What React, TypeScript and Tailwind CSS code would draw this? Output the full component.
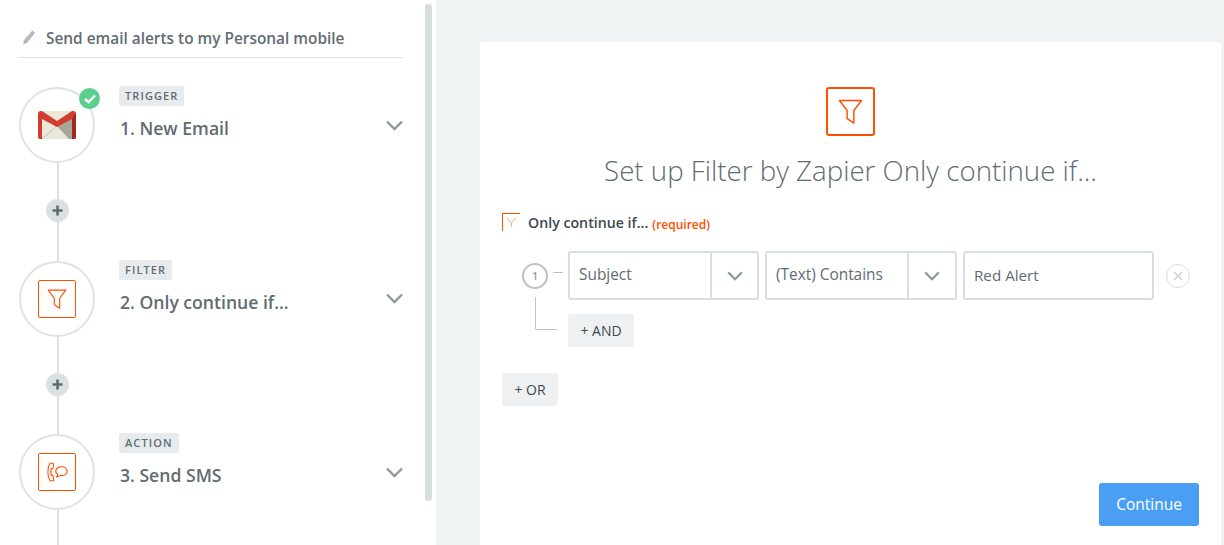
const font = { fontFamily: '"Open Sans", "Noto Sans", sans-serif' };

function Chevron({ className }: { className: string }) {
  return (
    <svg viewBox="0 0 17 11" className={className} fill="none" stroke="currentColor" strokeWidth="2.4">
      <polyline points="1,1.5 8.5,9 16,1.5" />
    </svg>
  );
}

function Funnel({ className, width = 1 }: { className: string; width?: number }) {
  return (
    <svg viewBox="0 0 26 26" className={className} fill="none" stroke="#ff4f00" strokeWidth={width} strokeLinejoin="round">
      <path d="M1.5 1.5H24.5L16.5 12V25L9.5 20.5V12Z" />
    </svg>
  );
}

function Gmail() {
  return (
    <svg viewBox="0 0 38 28" className="w-[38px] h-[28px]">
      <rect x="1" y="0" width="36" height="28" rx="1.5" fill="#ebe8da" />
      <path d="M19 15L34 7V28H31Z" fill="#a6a69b" />
      <path d="M4 28L19 15" stroke="#a5a495" strokeWidth="0.6" />
      <path d="M0 3Q0 0 3 0H4L19 10L34 0H35Q38 0 38 3V26Q38 28 36 28H34V8L19 16L4 8V28H2Q0 28 0 26Z" fill="#d23b2f" />
      <path d="M34 8L38 2V26Q38 28 36 28H34Z" fill="#a0281c" />
    </svg>
  );
}

function Phone() {
  return (
    <svg viewBox="0 0 24 22" className="w-[21px] h-[20px]" fill="none" stroke="#ff4f00" strokeWidth="1.3" strokeLinejoin="round">
      <path d="M6 1H3.5C1.5 4 1 7.5 1 11C1 14.5 1.5 18 3.5 21H6.5C7.5 21 8 20 7.5 19L6.8 15.5C6.5 14.6 5.5 14.6 4.8 15C4.2 12.5 4.2 9.5 4.8 7C5.5 7.4 6.5 7.4 6.8 6.5L7.5 3C8 2 7 1 6 1Z" />
      <path d="M16.5 5C12.8 5 10 7.2 10 10C10 11.6 10.9 12.9 12.3 13.7C12.2 15 11.6 15.8 10.8 16.5C12.8 16.4 14.3 15.8 15.3 14.9C15.7 15 16.1 15 16.5 15C20.2 15 23 12.8 23 10C23 7.2 20.2 5 16.5 5Z" />
    </svg>
  );
}

function Step({ tag, title, icon, plus = true, check = false }: { tag: string; title: string; icon: React.ReactNode; plus?: boolean; check?: boolean }) {
  return (
    <div className="flex h-[173.5px] shrink-0">
      <div className="flex flex-col items-center w-[76px] shrink-0">
        <div className="relative w-[76px] h-[76px] shrink-0 rounded-full border-2 border-[#dfe3e6] flex items-center justify-center">
          {icon}
          {check && (
            <div className="absolute -top-[1px] -right-[7px] w-[21px] h-[21px] rounded-full bg-[#5ccf8f] flex items-center justify-center">
              <svg viewBox="0 0 12 10" className="w-[12px] h-[10px]" fill="none" stroke="#fff" strokeWidth="2.4">
                <polyline points="1,5 4.5,8.2 11,1.5" />
              </svg>
            </div>
          )}
        </div>
        <div className="ml-[2px] w-[2px] h-[36px] bg-[#dbe0e3] shrink-0" />
        {plus && (
          <div className="ml-[1px] w-[23px] h-[23px] shrink-0 rounded-full bg-[#dbe0e3] flex items-center justify-center">
            <svg viewBox="0 0 11 11" className="w-[11px] h-[11px]" fill="none" stroke="#5f6c72" strokeWidth="2.6">
              <path d="M5.5 0.5V10.5M0.5 5.5H10.5" />
            </svg>
          </div>
        )}
        <div className="ml-[2px] w-[2px] flex-1 bg-[#dbe0e3]" />
      </div>
      <div className="ml-[24px] flex-1 flex flex-col items-start -mt-[1px]">
        <span className="h-[20px] px-[6px] rounded-[2px] bg-[#e8ebed] text-[#5f6c72] text-[11px] font-semibold tracking-[1.1px] leading-[20px]">{tag}</span>
        <div className="w-full flex items-center justify-between mt-[10px] h-[24px]">
          <span className="ml-[1px] text-[17.6px] font-semibold text-[#5f6c72] leading-[24px]">{title}</span>
          <Chevron className="w-[17px] h-[11px] text-[#8f989d] -mt-[6px]" />
        </div>
      </div>
    </div>
  );
}

function Select({ label, width, arrow }: { label: string; width: string; arrow: string }) {
  return (
    <div className={`flex h-[49px] ${width} shrink-0 rounded-[3px] border-2 border-[#d8dee1]`}>
      <div className="flex-1 pl-[9px] pb-[1px] flex items-center text-[15.4px] text-[#5f6c72]">{label}</div>
      <div className={`${arrow} shrink-0 border-l-2 border-[#d8dee1] flex items-center justify-center`}>
        <Chevron className="w-[16px] h-[10px] text-[#8f989d]" />
      </div>
    </div>
  );
}

export default function App() {
  return (
    <div style={font} className="flex w-[1224px] h-[545px] overflow-hidden bg-white">
      <aside className="relative w-[436px] shrink-0 h-full overflow-hidden bg-white">
        <div className="absolute left-[425px] top-[4px] w-[7px] h-[497px] rounded-[3px] bg-[#d9dee1]" />
        <div className="pl-[18px] w-[403px]">
          <div className="h-[58px] pt-[22px] border-b border-[#dfe3e6] flex items-start">
            <svg viewBox="0 0 14 16" className="ml-[4px] mt-[8px] w-[14px] h-[15px]" fill="#b4babd">
              <path d="M10.5 0.5L13.5 3L5 13.5L0.8 15.5L1.5 11Z" />
            </svg>
            <span className="ml-[10px] text-[15.4px] font-semibold text-[#5f6c72] leading-[34px] whitespace-nowrap">Send email alerts to my Personal mobile</span>
          </div>
          <div className="pl-[1px] pt-[29px] flex flex-col">
            <Step tag="TRIGGER" title="1. New Email" check icon={<Gmail />} />
            <Step tag="FILTER" title="2. Only continue if..." icon={
              <div className="w-[38px] h-[38px] rounded-[2px] border border-[#ff4f00] flex items-center justify-center">
                <Funnel className="w-[20px] h-[20px]" width={1.5} />
              </div>
            } />
            <Step tag="ACTION" title="3. Send SMS" icon={
              <div className="w-[38px] h-[38px] rounded-[2px] border border-[#ff4f00] flex items-center justify-center">
                <Phone />
              </div>
            } />
          </div>
        </div>
      </aside>
      <main className="flex-1 bg-[#f0f3f4] pt-[42px] pl-[44px] pr-[3px] flex flex-col">
        <div className="flex-1 bg-white rounded-t-[3px] px-[22px] pt-[45px] flex flex-col">
          <div className="mx-auto w-[49px] h-[49px] rounded-[3px] border-2 border-[#ff4f00] flex items-center justify-center">
            <Funnel className="w-[25px] h-[25px]" width={1.5} />
          </div>
          <h1 className="mt-[12px] text-center text-[27.7px] font-light text-[#5f6c72] leading-[44px] whitespace-nowrap">Set up Filter by Zapier Only continue if...</h1>
          <div className="mt-[21px] flex items-center h-[18px]">
            <div className="relative w-[18px] h-[18px] border-l border-t border-[#ff4f00] flex items-center justify-center">
              <svg viewBox="0 0 12 12" className="w-[11px] h-[11px]" fill="none" stroke="#ff9b73" strokeWidth="1">
                <path d="M1 1L6 6.5V11M11 1L6 6.5" />
              </svg>
            </div>
            <span className="ml-[8px] mt-[2px] text-[14.2px] font-semibold text-[#3e4a50]">Only continue if...</span>
            <span className="ml-[4px] mt-[5px] text-[12px] font-semibold text-[#ff4f00]">(required)</span>
          </div>
          <div className="mt-[20px] ml-[20px] flex">
            <div className="w-[46px] shrink-0 pt-[12px]">
              <div className="flex items-start">
                <div className="w-[26px] h-[26px] rounded-full border-2 border-[#bcc2c5] flex items-center justify-center text-[10px] font-semibold text-[#8f989d]">1</div>
                <div className="ml-[5px] mt-[9px] w-[10px] h-px bg-[#bcc2c5]" />
              </div>
              <div className="ml-[13px] mt-[8px] w-[22px] h-[33px] border-l border-b border-[#bcc2c5] rounded-bl-[2px]" />
            </div>
            <div className="flex flex-col items-start">
              <div className="flex items-start">
                <Select label="Subject" width="w-[191px]" arrow="w-[47px]" />
                <div className="ml-[6px]"><Select label="(Text) Contains" width="w-[192px]" arrow="w-[48px]" /></div>
                <div className="ml-[6px] h-[49px] w-[191px] rounded-[3px] border-2 border-[#d8dee1] pl-[9px] flex items-center text-[15.2px] text-[#5f6c72]">Red Alert</div>
                <div className="ml-[12px] mt-[13px] w-[24px] h-[24px] rounded-full border border-[#d8dcde] flex items-center justify-center">
                  <svg viewBox="0 0 10 10" className="w-[10px] h-[10px]" fill="none" stroke="#cdd2d5" strokeWidth="1.5">
                    <path d="M1 1L9 9M9 1L1 9" />
                  </svg>
                </div>
              </div>
              <button className="mt-[14px] w-[66px] h-[33px] rounded-[3px] bg-[#eff0f2] text-[14px] text-[#3e4a50]">+ AND</button>
            </div>
          </div>
          <button className="mt-[26px] w-[56px] h-[33px] rounded-[3px] bg-[#eff0f2] text-[14px] text-[#3e4a50]">+ OR</button>
          <button className="mt-[77px] self-end w-[100px] h-[43px] pt-[1px] rounded-[3px] bg-[#4a9ff5] text-[15.5px] text-white">Continue</button>
        </div>
      </main>
    </div>
  );
}
